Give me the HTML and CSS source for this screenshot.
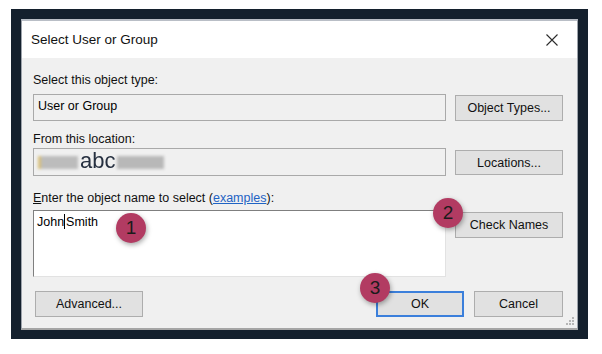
FILE: index.html
```html
<!DOCTYPE html>
<html lang="en">
<head>
  <meta charset="UTF-8">
  <title>Select User or Group</title>
  <link rel="stylesheet" href="styles.css">
</head>
<body>
  <div class="frame">
    <div class="dialog">
      <header class="titlebar">
        <h1>Select User or Group</h1>
        <svg class="close" width="12" height="12" viewBox="0 0 12 12">
          <path d="M0.5 0.5 L11.5 11.5 M11.5 0.5 L0.5 11.5" stroke="#2b2b2b" stroke-width="1.1" fill="none"/>
        </svg>
      </header>

      <main class="content">
        <label class="label first">Select this object type:</label>
        <div class="row">
          <div class="box">User or Group</div>
          <button class="btn">Object Types...</button>
        </div>

        <label class="label second">From this location:</label>
        <div class="row loc">
          <div class="box tall">
            <span class="smudge left"></span>
            <span class="abc">abc</span>
            <span class="smudge right"></span>
          </div>
          <button class="btn">Locations...</button>
        </div>

        <label class="label third"><u>E</u>nter the object name to select (<a href="#">examples</a>):</label>
        <div class="row names">
          <div class="names-box">John<span class="caret"></span>Smith</div>
          <button class="btn">Check Names</button>
        </div>

        <div class="actions">
          <button class="btn advanced">Advanced...</button>
          <div class="spacer"></div>
          <button class="btn ok">OK</button>
          <button class="btn cancel">Cancel</button>
        </div>
      </main>

      <svg class="grip" width="9" height="9" viewBox="0 0 9 9">
        <rect x="7" y="1" width="2" height="2" fill="#b5b5b5"/>
        <rect x="4" y="4" width="2" height="2" fill="#b5b5b5"/>
        <rect x="7" y="4" width="2" height="2" fill="#b5b5b5"/>
        <rect x="1" y="7" width="2" height="2" fill="#b5b5b5"/>
        <rect x="4" y="7" width="2" height="2" fill="#b5b5b5"/>
        <rect x="7" y="7" width="2" height="2" fill="#b5b5b5"/>
      </svg>

      <span class="badge b1">1</span>
      <span class="badge b2">2</span>
      <span class="badge b3">3</span>
    </div>
  </div>
</body>
</html>
```

FILE: styles.css
```css
:root {
  --clr-frame: #14202d;
  --clr-face: #f0f0f0;
  --clr-btn: #e1e1e1;
  --clr-btn-border: #adadad;
  --clr-badge: #b23b62;
  --clr-focus: #3b7fdb;
}
*, *::before, *::after {box-sizing: border-box; margin: 0}
body {
  background: #fff;
  font-family: 'Liberation Sans', Arial, sans-serif;
  font-size: 12.5px;
  color: #000;
}
.frame {
  margin: 9px 0 0 11px;
  width: 577px;
  height: 330px;
  background: var(--clr-frame);
  padding: 10px 10px 0 10px;
}
.dialog {
  position: relative;
  width: 557px;
  height: 311px;
  background: var(--clr-face);
  border: 1px solid #9da3ab;
  border-top: 2px solid #b9bec6;
  border-bottom: 2px solid #a5a5a5;
  display: flex;
  flex-direction: column;
}
.titlebar {
  height: 37px;
  background: #fff;
  display: flex;
  align-items: center;
  justify-content: space-between;
  padding: 0 19px 0 9px;
}
h1 {
  font-size: 13.5px;
  font-weight: normal;
  color: #111;
}
.content {
  padding: 14px 14px 0 11px;
  display: flex;
  flex-direction: column;
}
.label {
  display: block;
  line-height: 16px;
  height: 16px;
  color: #111;
}
.second { margin-top: 10px }
.third { margin-top: 14px }
.label a {
  color: #1f63c4;
  text-decoration: underline;
}
.row {
  display: flex;
  gap: 9px;
  align-items: flex-start;
  margin-top: 6px;
}
.loc { margin-top: 1px }
.names { margin-top: 4px }
.box {
  width: 413px;
  height: 27px;
  border: 1px solid #a9a9a9;
  background: var(--clr-face);
  padding: 0 4px;
  line-height: 23px;
}
.box.tall {
  height: 28px;
  display: flex;
  align-items: center;
  padding: 0 0 0 4px;
}
.smudge {
  display: block;
  height: 13px;
  background: #b8b8b8;
  filter: blur(1.5px);
}
.smudge.left {
  width: 40px;
  background: linear-gradient(90deg, #d9c07a 0 3px, #bcbcbc 3px);
}
.smudge.right { width: 47px }
.abc {
  font-size: 22px;
  color: #263040;
  padding: 0 2px 3px;
  filter: blur(0.6px);
}
.btn {
  font: inherit;
  color: #111;
  width: 108px;
  height: 26px;
  background: var(--clr-btn);
  border: 1px solid var(--clr-btn-border);
  padding: 0;
  margin-top: 1px;
}
.loc .btn { margin-top: 2px; height: 25px }
.names .btn { margin-top: 2px }
.names-box {
  width: 413px;
  height: 67px;
  background: #fff;
  border: 1px solid;
  border-color: #7f7f7f #e2e2e2 #e2e2e2 #7f7f7f;
  padding: 3px 3px;
  line-height: 16px;
}
.caret {
  display: inline-block;
  width: 1px;
  height: 15px;
  background: #000;
  vertical-align: -3px;
  margin: 0 1px 0 0;
}
.actions {
  display: flex;
  gap: 10px;
  margin-top: 14px;
  padding-left: 2px;
}
.spacer { flex: 1 }
.actions .btn { margin-top: 0 }
.ok {
  width: 88px;
  border: 2px solid var(--clr-focus);
}
.cancel { width: 89px }
.grip {
  position: absolute;
  right: 3px;
  bottom: 3px;
}
.badge {
  position: absolute;
  width: 30px;
  height: 30px;
  border-radius: 50%;
  background: var(--clr-badge);
  color: #1b1b1b;
  font-size: 19px;
  line-height: 30px;
  text-align: center;
  box-shadow: 1px 2px 5px rgba(0, 0, 0, 0.35);
}
.b1 { left: 94px; top: 192px }
.b2 { left: 411px; top: 177px }
.b3 { left: 338px; top: 252px }
```
